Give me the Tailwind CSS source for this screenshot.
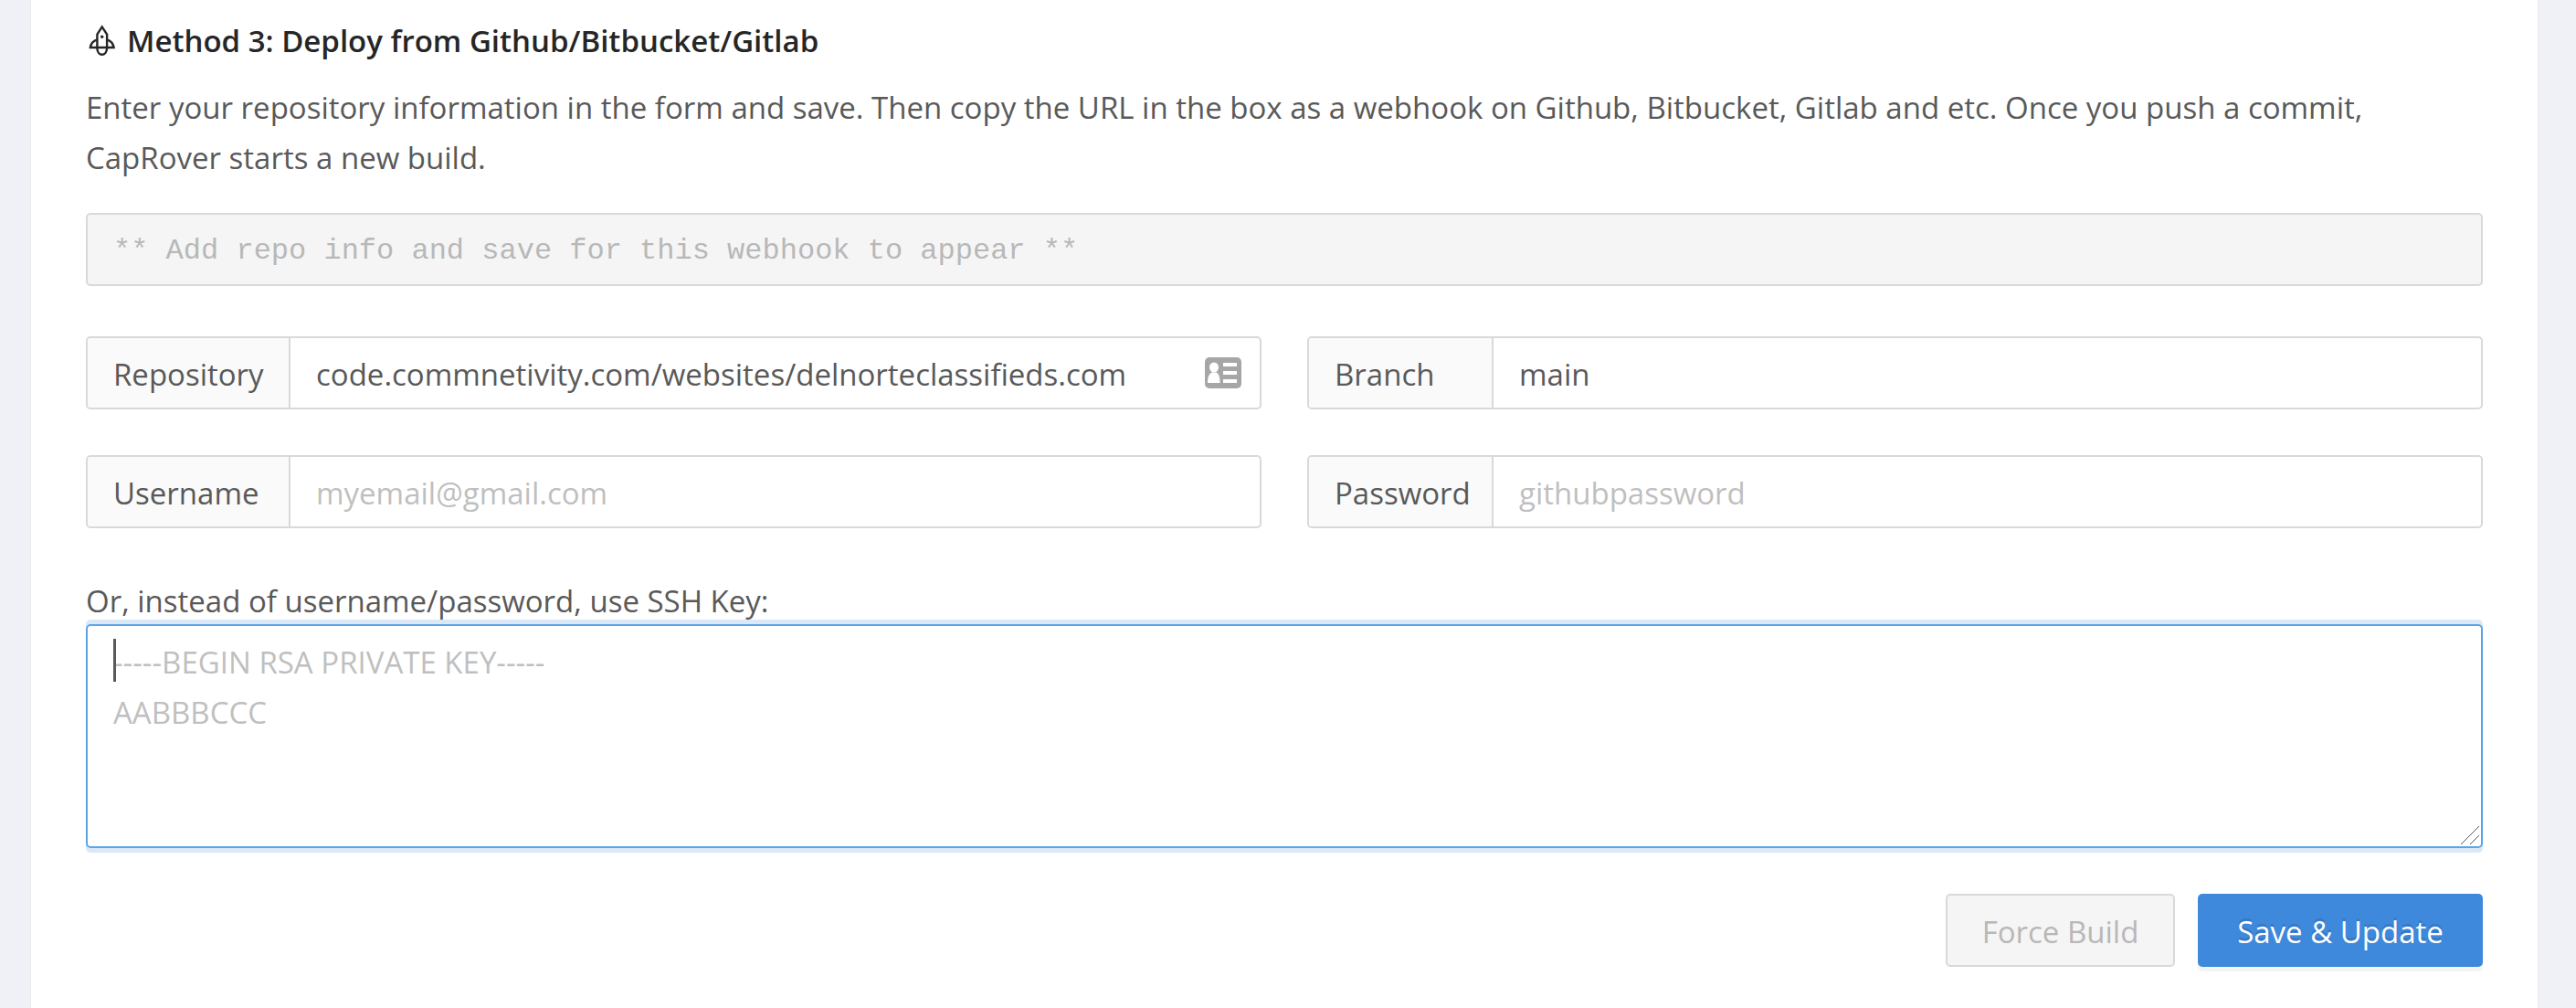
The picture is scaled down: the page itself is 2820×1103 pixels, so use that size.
<!DOCTYPE html>
<html lang="en">
<head>
<meta charset="utf-8">
<title>Deployment</title>
<script src="https://cdn.jsdelivr.net/npm/@tailwindcss/browser@4"></script>
</head>
<body class="bg-[#f0f1f6] font-['Open_Sans','Noto_Sans',sans-serif] text-[33px] leading-[55px] text-[#595959]">
<main class="mr-[41px] ml-[33px]">
  <section class="min-h-screen border-x border-[#ececec] bg-white px-15 pt-[17px] pb-11">
    <h4 class="flex items-center text-[#262626] font-semibold">
      <svg class="mr-2.5 size-[35px] shrink-0" viewBox="0 0 35 35" fill="none" stroke="currentColor" stroke-width="2.4" aria-hidden="true">
        <path d="M12.4 25V10.6L17.7 2.4l5.4 8.2V25"/>
        <path d="M12.4 16.4C8.6 17.6 5.4 20.8 5 25h25.4c-.4-4.200-3.500-7.400-7.300-8.600M3.700 25h28.100"/>
        <path d="M12.300 26c.3 4 2.700 6.800 5.400 6.800s5.100-2.800 5.400-6.800"/>
        <circle cx="17.700" cy="13.200" r="1.700" fill="currentColor" stroke="none"/>
      </svg>
      Method 3: Deploy from Github/Bitbucket/Gitlab
    </h4>
    <p class="mt-[18px]">Enter your repository information in the form and save. Then copy the URL in the box as a webhook on Github, Bitbucket, Gitlab and etc. Once you push a commit, CapRover starts a new build.</p>
    <form>
      <input type="text" aria-label="Webhook URL" disabled value="** Add repo info and save for this webhook to appear **" class="mt-[33px] block h-20 w-full rounded-[5px] border-2 border-[#d9d9d9] bg-[#f5f5f5] px-7 pt-0.5 font-['Liberation_Mono',monospace] text-[32px] text-[#b8b8b8]">
      <div class="mt-[55px] grid grid-cols-2 gap-[50px]">
        <div class="flex h-20 items-stretch overflow-hidden rounded-[5px] border-2 border-[#d9d9d9]">
          <label for="repo" class="flex w-[222px] shrink-0 items-center border-r-2 border-[#d9d9d9] bg-[#fafafa] pt-0.5 pl-7">Repository</label>
          <input id="repo" type="text" value="code.commnetivity.com/websites/delnorteclassifieds.com" class="min-w-0 flex-1 px-7 pt-0.5 outline-none">
          <svg class="mr-5 h-[34px] w-10 shrink-0 self-center" viewBox="0 0 40 34" aria-hidden="true">
            <rect width="40" height="34" rx="5" fill="#a6a6a6"/>
            <g fill="#fff"><ellipse cx="10" cy="11" rx="5" ry="5.500"/><path d="M3 28c0-6 1.500-10 4.500-11.500h5C15.500 18 16.500 22 16.500 28z"/><path d="M20 6h15v4H20zM20 15h15v4H20zM20 24h15v4H20z"/></g>
          </svg>
        </div>
        <div class="flex h-20 items-stretch overflow-hidden rounded-[5px] border-2 border-[#d9d9d9]">
          <label for="branch" class="flex w-[202px] shrink-0 items-center border-r-2 border-[#d9d9d9] bg-[#fafafa] pt-0.5 pl-7">Branch</label>
          <input id="branch" type="text" value="main" class="min-w-0 flex-1 px-7 pt-0.5 outline-none">
        </div>
        <div class="flex h-20 items-stretch overflow-hidden rounded-[5px] border-2 border-[#d9d9d9]">
          <label for="user" class="flex w-[222px] shrink-0 items-center border-r-2 border-[#d9d9d9] bg-[#fafafa] pt-0.5 pl-7">Username</label>
          <input id="user" type="text" placeholder="myemail@gmail.com" class="min-w-0 flex-1 px-7 pt-0.5 outline-none placeholder:text-[#bfbfbf]">
        </div>
        <div class="flex h-20 items-stretch overflow-hidden rounded-[5px] border-2 border-[#d9d9d9]">
          <label for="pass" class="flex w-[202px] shrink-0 items-center border-r-2 border-[#d9d9d9] bg-[#fafafa] pt-0.5 pl-7">Password</label>
          <input id="pass" type="password" placeholder="githubpassword" class="min-w-0 flex-1 px-7 pt-0.5 outline-none placeholder:text-[#bfbfbf]">
        </div>
      </div>
      <label for="key" class="mt-[54px] block leading-[51px]">Or, instead of username/password, use SSH Key:</label>
      <div class="relative">
        <textarea id="key" placeholder="-----BEGIN RSA PRIVATE KEY-----&#10;AABBBCCC" class="block h-[245px] w-full resize-none rounded-[5px] border-2 border-[#5ba4e6] px-7 py-3 shadow-[0_-5px_0_#dbe8f8,0_5px_0_#dbe8f8] outline-none placeholder:text-[#bfbfbf]"></textarea>
        <span class="absolute top-4 left-[30px] h-[47px] w-[3px] bg-[#595959]"></span>
        <svg class="absolute right-1 bottom-1 size-5" viewBox="0 0 20 20" stroke="#555" aria-hidden="true"><path d="M0 20 20 0M10 20 20 10"/></svg>
      </div>
      <div class="mt-[50px] flex justify-end gap-[25px]">
        <button type="button" disabled class="h-20 w-[251px] rounded-[5px] border-2 border-[#d9d9d9] bg-[#f5f5f5] pt-0.5 text-[#b8b8b8]">Force Build</button>
        <button type="submit" class="h-20 w-[312px] rounded-[5px] bg-[#3f89dc] pt-0.5 text-white shadow-[0_5px_0_#f4f4f4] text-shadow-[0_-3px_0_rgb(0_0_0/0.12)]">Save &amp; Update</button>
      </div>
    </form>
  </section>
</main>
</body>
</html>
